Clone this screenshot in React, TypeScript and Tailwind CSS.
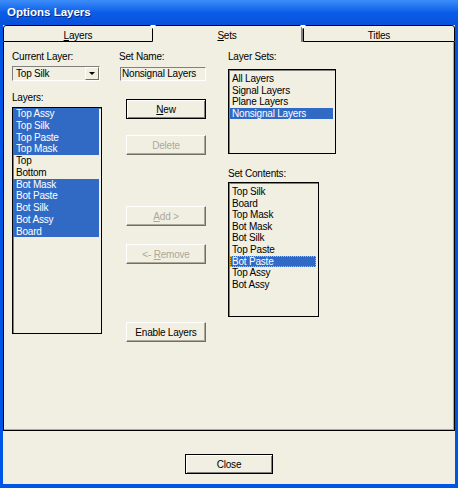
import React from "react";

const font = { fontFamily: '"Liberation Sans", Arial, sans-serif' };

type Row = { label: string; selected?: boolean; focus?: boolean };

const layers: Row[] = [
  { label: "Top Assy", selected: true },
  { label: "Top Silk", selected: true },
  { label: "Top Paste", selected: true },
  { label: "Top Mask", selected: true },
  { label: "Top" },
  { label: "Bottom" },
  { label: "Bot Mask", selected: true },
  { label: "Bot Paste", selected: true },
  { label: "Bot Silk", selected: true },
  { label: "Bot Assy", selected: true },
  { label: "Board", selected: true },
];

const layerSets: Row[] = [
  { label: "All Layers" },
  { label: "Signal Layers" },
  { label: "Plane Layers" },
  { label: "Nonsignal Layers", selected: true },
];

const setContents: Row[] = [
  { label: "Top Silk" },
  { label: "Board" },
  { label: "Top Mask" },
  { label: "Bot Mask" },
  { label: "Bot Silk" },
  { label: "Top Paste" },
  { label: "Bot Paste", selected: true, focus: true },
  { label: "Top Assy" },
  { label: "Bot Assy" },
];

function ListRow({ row, rowClass }: { row: Row; rowClass: string }) {
  return (
    <div
      className={
        rowClass +
        " whitespace-nowrap " +
        (row.selected ? "bg-[#316AC5] text-white " : "text-black ") +
        (row.focus ? "outline-1 outline-dotted outline-offset-[-1px] outline-[#F5B13A]" : "")
      }
    >
      {row.label}
    </div>
  );
}

function Button({
  children,
  primary,
  disabled,
  className,
}: {
  children: React.ReactNode;
  primary?: boolean;
  disabled?: boolean;
  className?: string;
}) {
  return (
    <div
      className={
        "flex h-[20px] items-center justify-center text-[10px] tracking-[-0.2px] " +
        (primary
          ? "border border-black shadow-[inset_1px_1px_0_#ffffff,inset_-1px_-1px_0_#808080] "
          : "border border-t-white border-l-white border-b-[#716F64] border-r-[#716F64] shadow-[inset_-1px_-1px_0_#ACA899] ") +
        (disabled ? "text-[#ACA899] " : "text-black ") +
        (className ?? "")
      }
    >
      {children}
    </div>
  );
}

export default function App() {
  return (
    <div className="flex h-[488px] w-[458px] flex-col bg-[#0055E5]" style={font}>
      {/* title bar */}
      <div className="flex h-[25px] items-center bg-gradient-to-b from-[#3C8DF8] via-[#0A5DE9] to-[#0850DA] pl-[7px]">
        <span className="text-[11.5px] font-bold text-white [text-shadow:1px_1px_0_#0A2A8A]">
          Options Layers
        </span>
      </div>

      <div className="mx-[3px] mb-[4px] flex flex-1 flex-col bg-[#F1EFE2]">
        {/* tabs */}
        <div className="flex h-[17px] text-[10px] tracking-[-0.2px] text-black">
          <div className="relative flex w-[150px] items-center justify-center rounded-tl-[3px] border border-black pt-[3px]">
            <span>
              <span className="underline">L</span>ayers
            </span>
            <span className="absolute -right-[4px] -top-[1px] h-0 w-0 border-l-[3px] border-r-[3px] border-t-[4px] border-l-transparent border-r-transparent border-t-white" />
          </div>
          <div className="flex w-[150px] items-center justify-center border-t border-r-2 border-t-black border-r-[#808080] pt-[3px]">
            <span>
              <span className="underline">S</span>ets
            </span>
          </div>
          <div className="relative flex flex-1 items-center justify-center rounded-tr-[3px] border border-black pt-[3px]">
            <span>Titles</span>
            <span className="absolute -left-[4px] -top-[1px] h-0 w-0 border-l-[3px] border-r-[3px] border-t-[4px] border-l-transparent border-r-transparent border-t-white" />
          </div>
        </div>

        {/* panel */}
        <div className="flex h-[389px] border-x border-b border-black pl-[8px] pt-[9px] text-[10px] tracking-[-0.2px] text-black shadow-[inset_-1px_-1px_0_#ACA899]">
          {/* left column */}
          <div className="flex w-[90px] flex-col">
            <div className="h-[12px] leading-[12px]">Current Layer:</div>
            <div className="mt-[3px] flex h-[15px] w-[88px] border border-t-[#808080] border-l-[#808080] border-b-white border-r-white">
              <div className="flex-1 pl-[3px] leading-[13px]">Top Silk</div>
              <div className="flex w-[14px] items-center justify-center border border-t-white border-l-white border-b-[#716F64] border-r-[#716F64]">
                <span className="h-0 w-0 border-l-[3px] border-r-[3px] border-t-[3px] border-l-transparent border-r-transparent border-t-black" />
              </div>
            </div>
            <div className="mt-[11px] h-[12px] leading-[12px]">Layers:</div>
            <div className="mt-[3px] h-[227px] w-[90px] border border-black pr-[2px] shadow-[inset_1px_1px_0_#808080]">
              {layers.map((r) => (
                <ListRow key={r.label} row={r} rowClass="h-[11.75px] leading-[11.75px] pl-[3px]" />
              ))}
            </div>
          </div>

          {/* middle column */}
          <div className="ml-[17px] flex w-[88px] flex-col">
            <div className="h-[12px] leading-[12px]">Set Name:</div>
            <div className="ml-[1px] mt-[4px] h-[14px] w-[86px] border border-t-[#808080] border-l-[#808080] border-b-white border-r-white pl-[1px] leading-[12px] whitespace-nowrap">
              Nonsignal Layers
            </div>
            <Button primary className="ml-[7px] mt-[18px] w-[80px]">
              <span>
                <span className="underline">N</span>ew
              </span>
            </Button>
            <Button disabled className="ml-[7px] mt-[16px] w-[80px]">
              Delete
            </Button>
            <Button disabled className="ml-[7px] mt-[51px] w-[80px]">
              <span>
                <span className="underline">A</span>dd &gt;
              </span>
            </Button>
            <Button disabled className="ml-[7px] mt-[18px] w-[80px]">
              <span>
                &lt;- <span className="underline">R</span>emove
              </span>
            </Button>
            <Button className="ml-[7px] mt-[58px] w-[80px]">Enable Layers</Button>
          </div>

          {/* right column */}
          <div className="ml-[21px] flex flex-col">
            <div className="h-[12px] leading-[12px]">Layer Sets:</div>
            <div className="mt-[6px] h-[85px] w-[108px] border border-black pl-[1px] pr-[2px] pt-[3px] shadow-[inset_1px_1px_0_#808080]">
              {layerSets.map((r) => (
                <ListRow key={r.label} row={r} rowClass="h-[11.5px] leading-[11.5px] pl-[2px]" />
              ))}
            </div>
            <div className="mt-[14px] h-[12px] leading-[12px]">Set Contents:</div>
            <div className="mt-[2px] h-[135px] w-[91px] border border-black pl-[1px] pr-[2px] pt-[3px] shadow-[inset_1px_1px_0_#808080]">
              {setContents.map((r) => (
                <ListRow key={r.label} row={r} rowClass="h-[11.6px] leading-[11.6px] pl-[2px]" />
              ))}
            </div>
          </div>
        </div>

        {/* footer */}
        <div className="flex flex-1 justify-center pt-[23px]">
          <Button primary className="w-[88px]">
            Close
          </Button>
        </div>
      </div>
    </div>
  );
}
